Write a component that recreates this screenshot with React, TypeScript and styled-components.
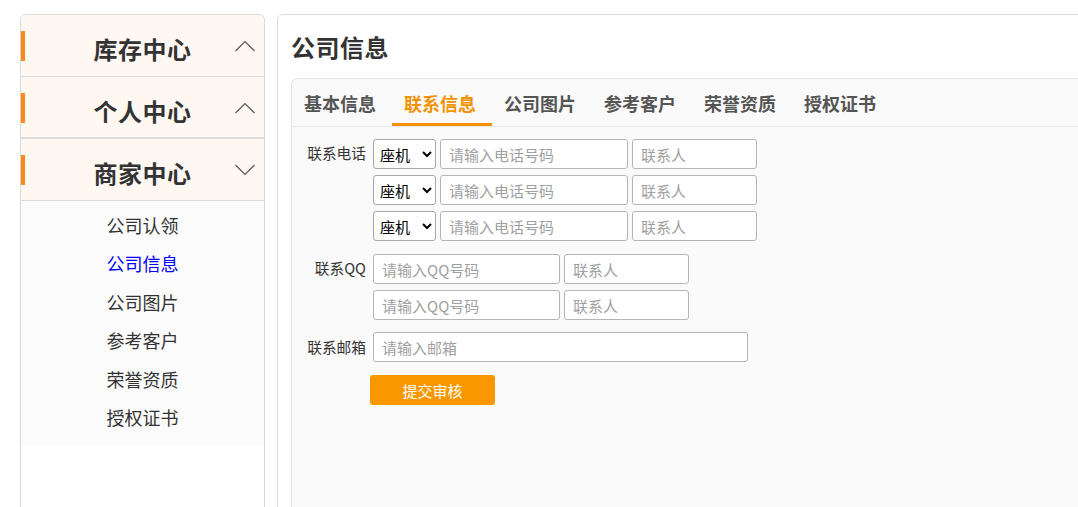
import { useState } from "react";
import styled, { createGlobalStyle } from "styled-components";

const GlobalStyle = createGlobalStyle`
    html, body {
        margin: 0;
        padding: 0;
        overflow: hidden;
        background: #fff;
    }
    body {
        font-family: "Noto Sans CJK SC", "Liberation Sans", sans-serif;
        color: #333;
    }
`;

const Page = styled.div`
    width: 1140px;
    display: flex;
    gap: 12px;
    padding: 14px 0 0 20px;
`;

const Sidebar = styled.aside`
    width: 243px;
    min-height: 520px;
    flex-shrink: 0;
    border: 1px solid #d9d9d9;
    border-radius: 6px 6px 0 0;
    overflow: hidden;
    background: #fff;
`;

const GroupHeader = styled.div<{ $thick?: boolean }>`
    position: relative;
    height: ${(p) => (p.$thick ? "60px" : "61px")};
    display: flex;
    align-items: center;
    justify-content: center;
    background: #fff8f2;
    border-bottom: ${(p) => (p.$thick ? "2px" : "1px")} solid #dcdcdc;
    cursor: pointer;
    &::before {
        content: "";
        position: absolute;
        left: 0;
        top: 16px;
        width: 4px;
        height: 30px;
        background: #fb8a16;
    }
    .title {
        font-size: 24px;
        font-weight: 700;
        letter-spacing: 0.5px;
        color: #333;
        padding-top: 6px;
    }
    svg {
        position: absolute;
        right: 9px;
        top: 25px;
    }
`;

const SubMenu = styled.ul`
    list-style: none;
    margin: 0;
    padding: 5px 0 9px;
    background: #fbfbfb;
`;

const SubItem = styled.li<{ $active?: boolean }>`
    height: 38.4px;
    line-height: 38.4px;
    text-align: center;
    font-size: 18px;
    color: ${(p) => (p.$active ? "#0000ff" : "#333")};
    cursor: pointer;
`;

const Main = styled.main`
    flex: 1;
    min-height: 520px;
    border: 1px solid #dddddd;
    border-radius: 6px 6px 0 0;
    padding: 0 0 0 13px;
    background: #fff;
`;

const PageTitle = styled.h1`
    margin: 0;
    height: 63px;
    line-height: 63px;
    font-size: 24px;
    font-weight: 700;
    letter-spacing: 0.5px;
    color: #333;
`;

const Card = styled.section`
    min-height: 460px;
    border: 1px solid #e6e6e6;
    border-radius: 6px 6px 0 0;
    background: #fafafa;
`;

const TabBar = styled.div`
    display: flex;
    height: 47px;
    border-bottom: 1px solid #e6e6e6;
`;

const Tab = styled.div<{ $active?: boolean }>`
    width: 100px;
    display: flex;
    align-items: center;
    justify-content: center;
    font-size: 18px;
    font-weight: 700;
    color: ${(p) => (p.$active ? "#f39200" : "#555")};
    border-bottom: 3px solid ${(p) => (p.$active ? "#f39200" : "transparent")};
    padding: 3px 4px 0 0;
    box-sizing: border-box;
    cursor: pointer;
`;

const Form = styled.div`
    padding: 12px 0 0 0;
    display: flex;
    flex-direction: column;
`;

const FieldGroup = styled.div<{ $gap?: number }>`
    display: flex;
    margin-top: ${(p) => p.$gap ?? 0}px;
`;

const Label = styled.label<{ $lh?: number }>`
    width: 74px;
    padding-right: 7px;
    text-align: right;
    font-size: 14.7px;
    line-height: ${(p) => p.$lh ?? 27}px;
    color: #333;
    white-space: nowrap;
`;

const Rows = styled.div`
    display: flex;
    flex-direction: column;
    gap: 6px;
`;

const Row = styled.div`
    display: flex;
    gap: 4px;
`;

const Select = styled.select`
    width: 63px;
    height: 30px;
    border: 1px solid #a9a9a9;
    border-radius: 3px;
    background: #fff;
    font-family: "Noto Sans CJK SC", sans-serif;
    font-size: 15px;
    color: #000;
    padding: 0 2px;
`;

const Input = styled.input<{ $w: number }>`
    width: ${(p) => p.$w}px;
    height: 30px;
    box-sizing: border-box;
    border: 1px solid #b5b5b5;
    border-radius: 3px;
    background: #fff;
    padding: 0 8px;
    font-family: "Noto Sans CJK SC", "Liberation Sans", sans-serif;
    font-size: 15px;
    color: #333;
    outline: none;
    &::placeholder {
        color: #a0a0a0;
    }
`;

const SubmitButton = styled.button`
    margin: 13px 0 0 78px;
    width: 125px;
    height: 30px;
    border: none;
    border-radius: 3px;
    background: #f99700;
    color: #fff;
    font-family: "Noto Sans CJK SC", sans-serif;
    font-size: 15px;
    cursor: pointer;
`;

function Chevron({ up }: { up: boolean }) {
    return (
        <svg width="20" height="12" viewBox="0 0 20 12" fill="none">
            <polyline
                points={up ? "0.5,11 10,1.5 19.5,11" : "0.5,1 10,10.5 19.5,1"}
                stroke="#555"
                strokeWidth="1.2"
            />
        </svg>
    );
}

const groups = [
    { title: "库存中心", open: false },
    { title: "个人中心", open: false },
    { title: "商家中心", open: true },
];

const subItems = ["公司认领", "公司信息", "公司图片", "参考客户", "荣誉资质", "授权证书"];
const tabs = ["基本信息", "联系信息", "公司图片", "参考客户", "荣誉资质", "授权证书"];

export default function App() {
    const [tab, setTab] = useState(1);
    return (
        <>
            <GlobalStyle />
            <Page>
                <Sidebar>
                    {groups.map((g, i) => (
                        <GroupHeader key={g.title} $thick={i === 1}>
                            <span className="title">{g.title}</span>
                            <Chevron up={!g.open} />
                        </GroupHeader>
                    ))}
                    <SubMenu>
                        {subItems.map((s) => (
                            <SubItem key={s} $active={s === "公司信息"}>
                                {s}
                            </SubItem>
                        ))}
                    </SubMenu>
                </Sidebar>
                <Main>
                    <PageTitle>公司信息</PageTitle>
                    <Card>
                        <TabBar>
                            {tabs.map((t, i) => (
                                <Tab key={t} $active={i === tab} onClick={() => setTab(i)}>
                                    {t}
                                </Tab>
                            ))}
                        </TabBar>
                        <Form>
                            <FieldGroup>
                                <Label>联系电话</Label>
                                <Rows>
                                    {[0, 1, 2].map((n) => (
                                        <Row key={n}>
                                            <Select defaultValue="座机">
                                                <option>座机</option>
                                                <option>手机</option>
                                            </Select>
                                            <Input $w={188} placeholder="请输入电话号码" />
                                            <Input $w={125} placeholder="联系人" />
                                        </Row>
                                    ))}
                                </Rows>
                            </FieldGroup>
                            <FieldGroup $gap={13}>
                                <Label>联系QQ</Label>
                                <Rows>
                                    {[0, 1].map((n) => (
                                        <Row key={n}>
                                            <Input $w={187} placeholder="请输入QQ号码" />
                                            <Input $w={125} placeholder="联系人" />
                                        </Row>
                                    ))}
                                </Rows>
                            </FieldGroup>
                            <FieldGroup $gap={12}>
                                <Label $lh={30}>联系邮箱</Label>
                                <Input $w={375} placeholder="请输入邮箱" />
                            </FieldGroup>
                            <div>
                                <SubmitButton>提交审核</SubmitButton>
                            </div>
                        </Form>
                    </Card>
                </Main>
            </Page>
        </>
    );
}
